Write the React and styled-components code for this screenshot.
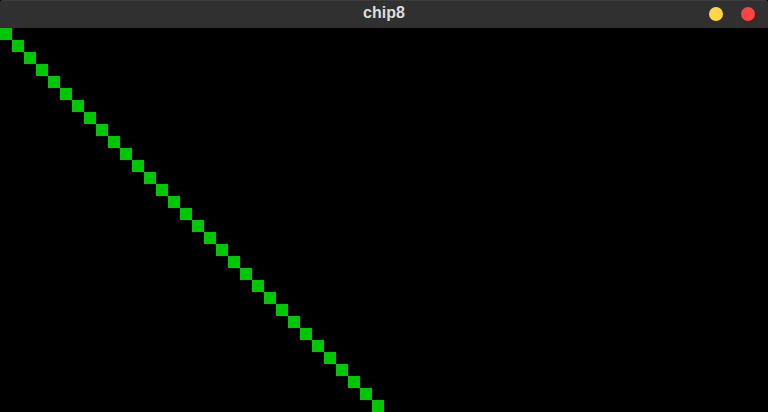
import React from "react";
import styled, { createGlobalStyle } from "styled-components";

const GlobalStyle = createGlobalStyle`
  html, body {
    margin: 0;
    padding: 0;
    background: #000;
    overflow: hidden;
  }
`;

const Window = styled.div`
  width: 768px;
  height: 412px;
  display: flex;
  flex-direction: column;
  background: #000;
`;

const TitleBar = styled.div`
  height: 28px;
  flex-shrink: 0;
  display: grid;
  grid-template-columns: 1fr auto 1fr;
  align-items: center;
  background: #303030;
  border-top: 1px solid #3c3c3c;
  box-sizing: border-box;
  border-radius: 3px 3px 0 0;
`;

const Title = styled.div`
  grid-column: 2;
  font-family: "Liberation Sans", Arial, sans-serif;
  font-weight: bold;
  font-size: 16px;
  color: #dcdcdc;
  margin-top: -3px;
`;

const Controls = styled.div`
  grid-column: 3;
  justify-self: end;
  display: flex;
  gap: 18px;
  padding-right: 13px;
  margin-top: -1px;
`;

const Dot = styled.span`
  width: 14px;
  height: 14px;
  border-radius: 50%;
  background: ${p => p.color};
`;

const Screen = styled.div`
  width: 768px;
  height: 384px;
  display: grid;
  grid-template-columns: repeat(64, 12px);
  grid-template-rows: repeat(32, 12px);
  background: #000;
`;

const Pixel = styled.div`
  grid-column: ${p => p.x + 1};
  grid-row: ${p => p.y + 1};
  background: #00c800;
`;

const pixels = Array.from({ length: 32 }, (_, i) => ({ x: i, y: i }));

export default function App() {
  return (
    <>
      <GlobalStyle />
      <Window>
        <TitleBar>
          <Title>chip8</Title>
          <Controls>
            <Dot color="#fdd844" />
            <Dot color="#fc4343" />
          </Controls>
        </TitleBar>
        <Screen>
          {pixels.map(p => (
            <Pixel key={p.x} x={p.x} y={p.y} />
          ))}
        </Screen>
      </Window>
    </>
  );
}
